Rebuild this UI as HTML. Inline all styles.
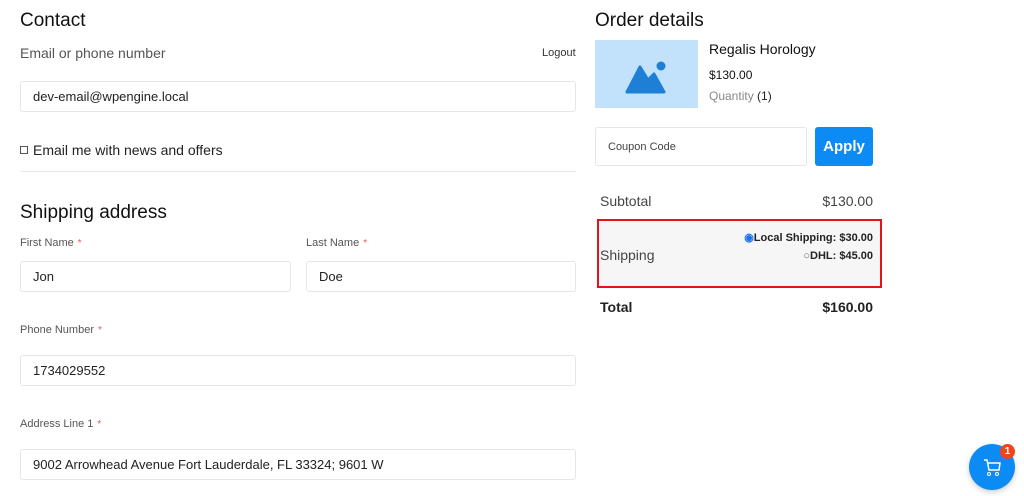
<!DOCTYPE html>
<html><head><style>
*{box-sizing:border-box;margin:0;padding:0}
body{width:1024px;height:496px;overflow:hidden;background:#fff;font-family:"Liberation Sans",sans-serif;color:#1e1e1e;position:relative}
.a{position:absolute}
.h{font-size:19px;color:#111}
.in{position:absolute;border:1px solid #e6e6e6;border-radius:3px;font-size:13px;color:#222;padding-left:12px;display:flex;align-items:center}
.lbl{font-size:11px;color:#555}
.st{color:#e55;font-size:10px;margin-left:4px}
</style></head><body>
<div class="a h" style="left:20px;top:10px">Contact</div>
<div class="a" style="left:20px;top:45px;font-size:14px;color:#555">Email or phone number</div>
<div class="a" style="left:542px;top:47px;font-size:11px;color:#333">Logout</div>
<div class="in" style="left:20px;top:81px;width:556px;height:31px">dev-email@wpengine.local</div>
<div class="a" style="left:20px;top:142px;font-size:14px;color:#222;display:flex;align-items:center"><span style="width:8px;height:8px;border:1px solid #555;display:inline-block;margin-right:5px"></span>Email me with news and offers</div>
<div class="a" style="left:20px;top:171px;width:556px;border-top:1px solid #e8e8e8"></div>
<div class="a h" style="left:20px;top:202px">Shipping address</div>
<div class="a lbl" style="left:20px;top:237px">First Name<span class="st">*</span></div>
<div class="a lbl" style="left:306px;top:237px">Last Name<span class="st">*</span></div>
<div class="in" style="left:20px;top:261px;width:271px;height:31px">Jon</div>
<div class="in" style="left:306px;top:261px;width:270px;height:31px">Doe</div>
<div class="a lbl" style="left:20px;top:324px">Phone Number<span class="st">*</span></div>
<div class="in" style="left:20px;top:355px;width:556px;height:31px">1734029552</div>
<div class="a lbl" style="left:20px;top:418px">Address Line 1<span class="st">*</span></div>
<div class="in" style="left:20px;top:449px;width:556px;height:31px">9002 Arrowhead Avenue Fort Lauderdale, FL 33324; 9601 W</div>

<div class="a h" style="left:595px;top:10px">Order details</div>
<div class="a" style="left:595px;top:40px;width:103px;height:68px;background:#c2e2fc">
<svg width="103" height="68"><path d="M32 52 L45 27 L53 40 L59 34 L69 52 Z" fill="#1d7fd6" stroke="#1d7fd6" stroke-width="3" stroke-linejoin="round"/><circle cx="66" cy="26" r="4.5" fill="#1d7fd6"/></svg></div>
<div class="a" style="left:709px;top:41px;font-size:14px;color:#111">Regalis Horology</div>
<div class="a" style="left:709px;top:68px;font-size:12px;color:#111">$130.00</div>
<div class="a" style="left:709px;top:89px;font-size:12px;color:#888">Quantity <span style="color:#222">(1)</span></div>
<div class="in" style="left:595px;top:127px;width:212px;height:39px;font-size:11px;color:#444">Coupon Code</div>
<div class="a" style="left:815px;top:127px;width:58px;height:39px;background:#0d8bf5;border-radius:3px;color:#fff;font-size:15px;font-weight:bold;display:flex;align-items:center;justify-content:center">Apply</div>
<div class="a" style="left:600px;top:193px;font-size:14px;color:#444">Subtotal</div>
<div class="a" style="right:151px;top:193px;font-size:14px;color:#444">$130.00</div>
<div class="a" style="left:597px;top:219px;width:285px;height:69px;border:2px solid #e5141b;background:#f6f6f6"></div>
<div class="a" style="left:600px;top:247px;font-size:14px;color:#444">Shipping</div>
<div class="a" style="right:151px;top:231px;font-size:11px;font-weight:bold;color:#222"><span style="color:#1a73e8">◉</span>Local Shipping: $30.00</div>
<div class="a" style="right:151px;top:250px;font-size:11px;font-weight:bold;color:#222"><span style="font-weight:normal;color:#666">○</span>DHL: $45.00</div>
<div class="a" style="left:600px;top:299px;font-size:14px;font-weight:bold;color:#222">Total</div>
<div class="a" style="right:151px;top:299px;font-size:14px;font-weight:bold;color:#222">$160.00</div>

<div class="a" style="left:969px;top:444px;width:46px;height:46px;border-radius:50%;background:#0d8bf5;box-shadow:0 2px 6px rgba(0,0,0,.2)">
<svg width="46" height="46"><path d="M15 16 h3 l2 10 h10 l1-7 h-12" fill="none" stroke="#fff" stroke-width="1.5"/><circle cx="20" cy="30" r="1.5" fill="none" stroke="#fff"/><circle cx="28" cy="30" r="1.5" fill="none" stroke="#fff"/></svg></div>
<div class="a" style="left:1000px;top:444px;width:15px;height:15px;border-radius:50%;background:#f0441a;color:#fff;font-size:10px;font-weight:bold;text-align:center;line-height:15px">1</div>
</body></html>
